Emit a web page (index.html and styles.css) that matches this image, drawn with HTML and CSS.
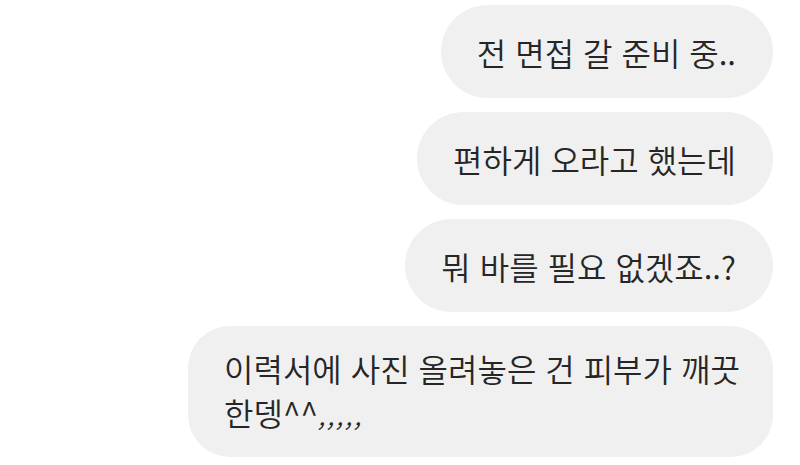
FILE: index.html
```html
<!DOCTYPE html>
<html lang="ko">
<head>
    <meta charset="UTF-8">
    <meta name="viewport" content="width=device-width, initial-scale=1.0">
    <title>Chat</title>
    <link rel="stylesheet" href="styles.css">
</head>
<body>
    <div class="chat">
        <div class="bubble">전 면접 갈 준비 중..</div>
        <div class="bubble">편하게 오라고 했는데</div>
        <div class="bubble">뭐 바를 필요 없겠죠..?</div>
        <div class="bubble multi">이력서에 사진 올려놓은 건 피부가 깨끗<br>한뎅^^<span class="commas">,,,,,</span></div>
    </div>
</body>
</html>
```

FILE: styles.css
```css
body {
    margin: 0;
    background-color: #ffffff;
    font-family: 'Noto Sans CJK KR', 'Noto Sans', sans-serif;
}
.chat {
    display: flex;
    flex-direction: column;
    align-items: flex-end;
    gap: 14px;
    padding: 5px 27px 0 0;
}
.bubble {
    box-sizing: border-box;
    min-height: 93px;
    display: flex;
    align-items: center;
    padding: 20px 37px 20px 36px;
    background-color: #f0f0f0;
    border-radius: 47px;
    color: #262626;
    font-size: 32px;
    font-weight: 350;
    line-height: 44px;
    white-space: nowrap;
}
.multi {
    display: block;
    min-height: 0;
    width: 585px;
    border-radius: 42px;
}
.commas {
    font-style: italic;
    font-size: 26px;
    letter-spacing: 2px;
}
```
